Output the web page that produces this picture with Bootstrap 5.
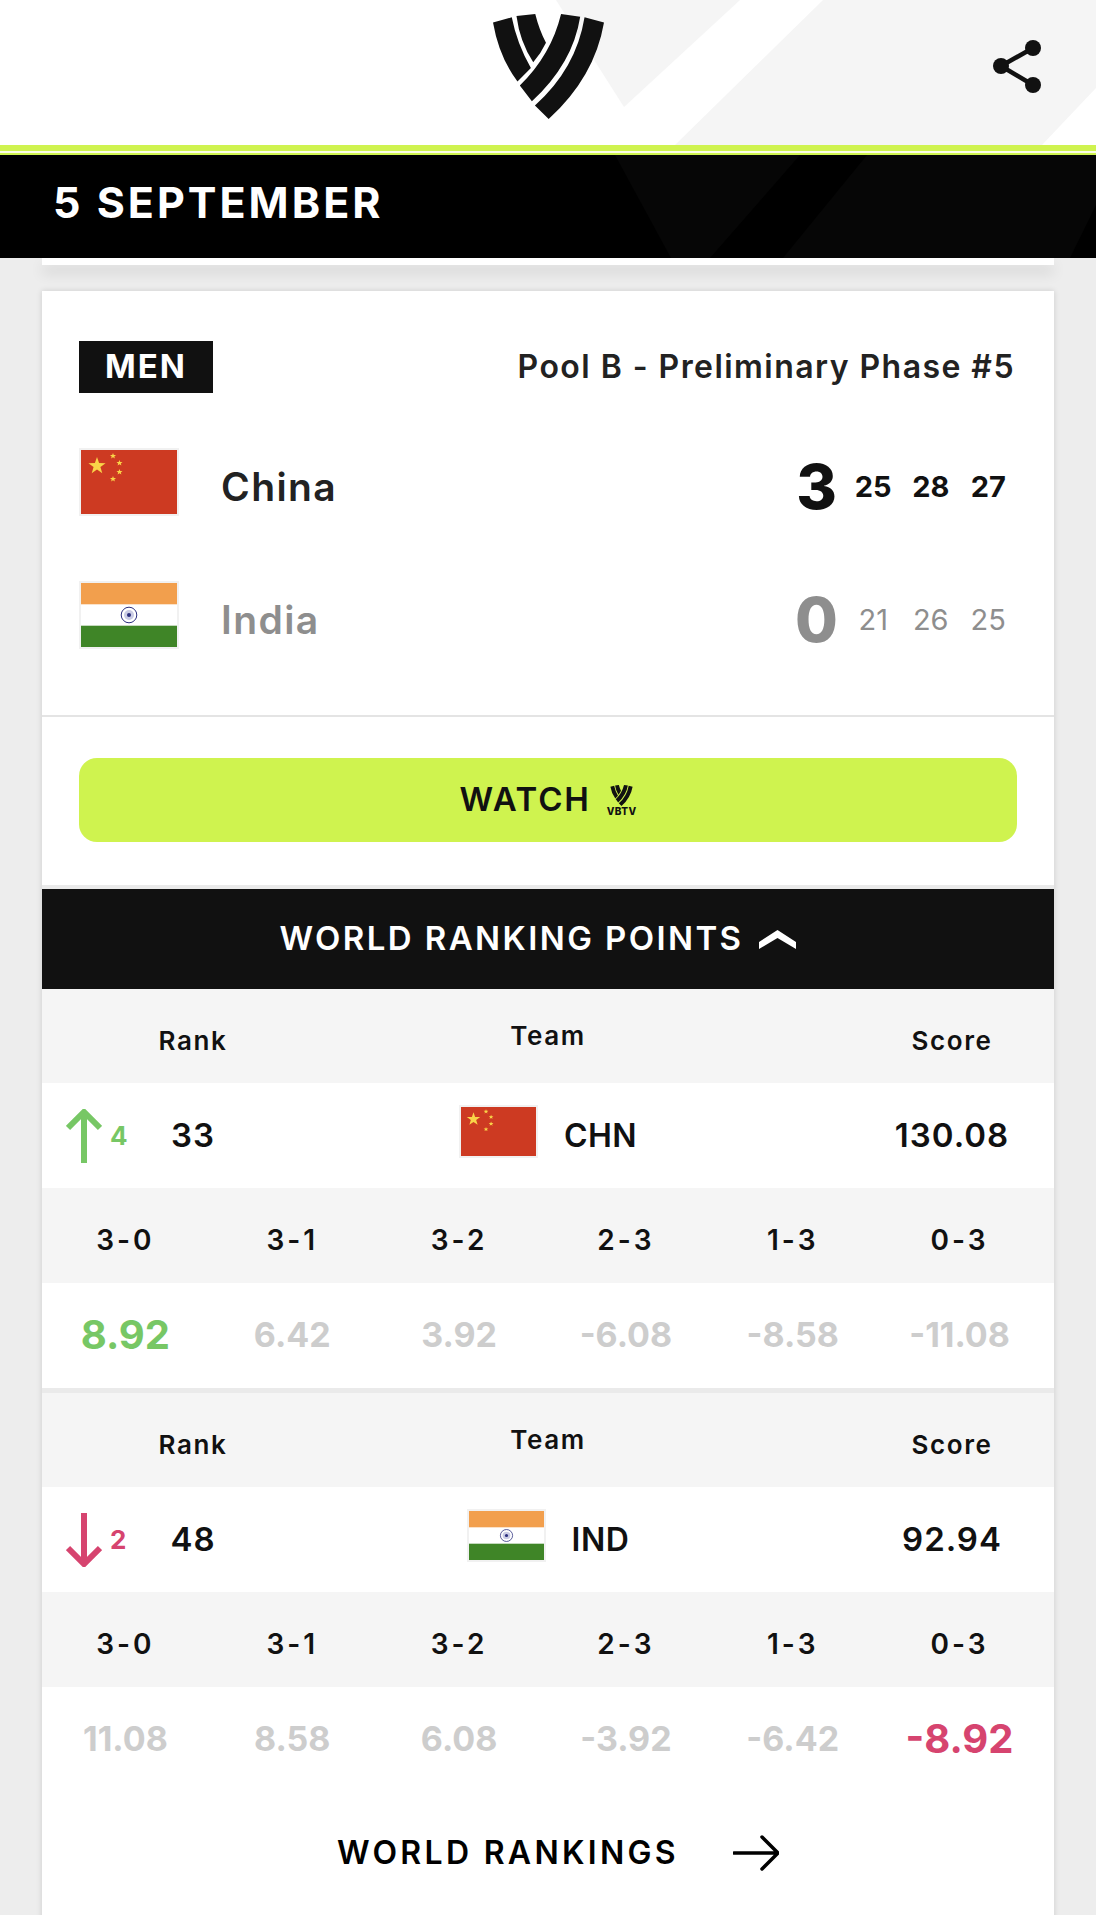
<!DOCTYPE html>
<html lang="en">

<head>
    <meta charset="UTF-8">
    <meta name="viewport" content="width=device-width, initial-scale=1.0">
    <title>5 September - Match Result</title>
    <link href="https://cdn.jsdelivr.net/npm/bootstrap@5.3.3/dist/css/bootstrap.min.css" rel="stylesheet">
    <script src="https://cdn.jsdelivr.net/npm/bootstrap@5.3.3/dist/js/bootstrap.bundle.min.js"></script>
    <style>
        html, body {
            height: 1915px;
            overflow: hidden;
        }

        body {
            background-color: #ededed;
            color: #111;
            font-family: Inter, "Liberation Sans", sans-serif;
        }

        /* header */
        .top-head {
            height: 145px;
            display: grid;
            grid-template-columns: 1fr auto 1fr;
        }

        .head-decor {
            inset: 0;
        }

        .head-logo {
            width: 111px;
            height: 105px;
            margin-top: 14px;
        }

        .share-icon {
            width: 52px;
            height: 58px;
            margin: 38px 52px 0 0;
            justify-self: end;
        }

        .lime-stripe {
            height: 10px;
            background-color: #fbfde6;
            border-top: 6px solid #cff34f;
            border-bottom: 2px solid #cff34f;
        }

        .date-bar {
            height: 103px;
            background-color: #000;
            color: #fff;
            padding: 0 0 8px 53px;
        }

        .date-bar span {
            font-size: 43px;
            font-weight: 700;
            letter-spacing: 3px;
            line-height: 1;
        }

        .prev-strip {
            height: 7px;
            margin: 0 42px 26px;
            background-color: #fff;
            box-shadow: 0 8px 14px rgba(0, 0, 0, .12);
        }

        /* match card */
        .match-box {
            margin: 0 42px;
            height: 1700px;
            background-color: #fff;
            box-shadow: 0 0 6px rgba(0, 0, 0, .14);
        }

        .match-top {
            height: 426px;
            padding: 50px 37px 0;
            border-bottom: 2px solid #e4e4e4;
        }

        .gender-tag {
            width: 134px;
            height: 52px;
            background-color: #111;
            color: #fff;
            font-size: 33px;
            font-weight: 700;
            letter-spacing: 2px;
        }

        .pool-name {
            font-size: 32px;
            font-weight: 600;
            letter-spacing: 1.45px;
            color: #222;
            margin-right: 2px;
        }

        .team-line {
            height: 133px;
        }

        .team-line.first {
            margin-top: 27px;
        }

        .flag-big {
            width: 100px;
            height: 68px;
            margin-bottom: 10px;
            border: 2px solid #f1f1f1;
        }

        .team-name {
            margin: 2px 0 0 42px;
            font-size: 39px;
            font-weight: 600;
            letter-spacing: 1.4px;
            color: #222;
        }

        .big-set {
            width: 56px;
            text-align: center;
            font-size: 62px;
            font-weight: 800;
            line-height: 1;
        }

        .set-pt {
            width: 57.5px;
            text-align: center;
            font-size: 29px;
        }

        .won {
            color: #111;
        }

        .won .set-pt {
            font-weight: 700;
        }

        .lost {
            color: #8e8e8e;
        }

        .lost .set-pt {
            font-weight: 400;
        }

        .watch-wrap {
            height: 172px;
            padding: 41px 37px 0;
            border-bottom: 4px solid #eaeaea;
        }

        .watch-btn {
            width: 938px;
            height: 84px;
            border-radius: 18px;
            border: 0;
            background-color: #cff34f;
            color: #111;
            font-size: 33px;
            font-weight: 600;
            letter-spacing: 1.8px;
        }

        .watch-btn:hover {
            background-color: #c4e845;
            color: #111;
        }

        .vbtv {
            font-size: 10px;
            font-weight: 800;
            line-height: 1;
            letter-spacing: .4px;
        }

        .vbtv svg {
            width: 23px;
            height: 21px;
        }

        .rank-toggle {
            height: 100px;
            padding-right: 20px;
            background-color: #111;
            color: #fff;
            font-size: 33px;
            font-weight: 600;
            letter-spacing: 2.4px;
        }

        /* ranking tables */
        .tri-cols {
            display: grid;
            grid-template-columns: 204px 1fr 204px;
            align-items: center;
        }

        .six-cols {
            display: grid;
            grid-template-columns: repeat(6, 1fr);
            align-items: center;
            text-align: center;
            padding-right: 11px;
        }

        .head-line {
            height: 94px;
            background-color: #f5f5f5;
            font-size: 26px;
            font-weight: 600;
            letter-spacing: 1.6px;
        }

        .head-line .rank-label {
            padding: 9px 0 0 98px;
            text-align: center;
        }

        .head-line .team-label {
            text-align: center;
            padding-bottom: 2px;
        }

        .head-line .score-label {
            padding-top: 9px;
            text-align: center;
        }

        .team-line-small {
            height: 105px;
            font-size: 33px;
            font-weight: 600;
            letter-spacing: 1px;
        }

        .delta {
            width: 98px;
            padding-left: 24px;
            font-size: 26px;
            font-weight: 700;
        }

        .delta svg {
            width: 36px;
            height: 54px;
            margin-right: 8px;
        }

        .delta.up {
            color: #77c765;
        }

        .delta.down {
            color: #d6446f;
        }

        .rank-num {
            width: 106px;
            text-align: center;
        }

        .flag-small {
            width: 79px;
            height: 53px;
            margin: 0 26px 8px 0;
            border: 2px solid #f1f1f1;
        }

        .team-code {
            font-size: 32px;
            font-weight: 600;
            letter-spacing: .5px;
        }

        .score-val {
            text-align: center;
        }

        .sets-head {
            height: 95px;
            padding-top: 8px;
            background-color: #f5f5f5;
            font-size: 28px;
            font-weight: 600;
            letter-spacing: 3px;
        }

        .sets-vals {
            height: 105px;
            padding-bottom: 2px;
            font-size: 34px;
            font-weight: 700;
            color: #cdcdcd;
        }

        .sets-vals .gain,
        .sets-vals .loss {
            font-size: 40px;
            font-weight: 700;
        }

        .gain {
            color: #77c765;
        }

        .loss {
            color: #d6446f;
        }

        .table-gap {
            height: 5px;
            background-color: #eaeaea;
        }

        .more-link {
            height: 140px;
            padding: 0 0 18px 20px;
            color: #000;
            font-size: 32px;
            font-weight: 600;
            letter-spacing: 3.3px;
            text-decoration: none;
        }

        .more-link svg {
            width: 46px;
            height: 36px;
            margin-left: 54px;
        }
    </style>
</head>

<body>
    <!-- shared drawings -->
    <svg width="0" height="0" class="position-absolute">
        <symbol id="vLogo" viewBox="127 42 331 313">
            <path fill="currentColor" d="M127 67 183 52Q198 130 240 203L200 243Q145 170 127 67Z" />
            <path fill="currentColor" d="M197 48 253 42Q265 90 285 128 270 160 247 186 207 125 197 48Z" />
            <path fill="currentColor" d="M330 42 387 50Q365 190 243 302L207 255Q300 165 330 42Z" />
            <path fill="currentColor" d="M400 52 458 67Q430 230 293 355L252 315Q375 205 400 52Z" />
        </symbol>
        <symbol id="flagChina" viewBox="0 0 96 64" preserveAspectRatio="none">
            <rect width="96" height="64" fill="#cd3a22" />
            <g fill="#f9d448">
                <polygon points="16,7 18.1,13.1 24.6,13.2 19.4,17.1 21.3,23.3 16,19.6 10.7,23.3 12.6,17.1 7.4,13.2 13.9,13.1" />
                <polygon points="32,3 32.8,5 35,5 33.3,6.4 33.9,8.5 32,7.3 30.1,8.5 30.7,6.4 29,5 31.2,5" />
                <polygon points="38.5,10 39.3,12 41.5,12 39.8,13.4 40.4,15.5 38.5,14.3 36.6,15.5 37.2,13.4 35.5,12 37.7,12" />
                <polygon points="38.5,19 39.3,21 41.5,21 39.8,22.4 40.4,24.5 38.5,23.3 36.6,24.5 37.2,22.4 35.5,21 37.7,21" />
                <polygon points="32,26 32.8,28 35,28 33.3,29.4 33.9,31.5 32,30.3 30.1,31.5 30.7,29.4 29,28 31.2,28" />
            </g>
        </symbol>
        <symbol id="flagIndia" viewBox="0 0 96 64" preserveAspectRatio="none">
            <rect width="96" height="64" fill="#fff" />
            <rect width="96" height="21.3" fill="#f29f4d" />
            <rect y="42.7" width="96" height="21.3" fill="#3f8527" />
            <circle cx="48" cy="32" r="7.8" fill="none" stroke="#2b2f7e" stroke-width="1" />
            <circle cx="48" cy="32" r="5" fill="#c9cbe4" />
            <circle cx="48" cy="32" r="2" fill="#2b2f7e" />
        </symbol>
    </svg>

    <!-- Header -->
    <header class="top-head position-relative bg-white overflow-hidden">
        <svg class="head-decor position-absolute" width="1096" height="145" viewBox="0 0 1096 145">
            <polygon points="556,0 740,0 624,107" fill="#f5f5f5" />
            <polygon points="823,0 1096,0 1096,88 1042,145 675,145" fill="#f5f5f5" />
        </svg>
        <div></div>
        <svg class="head-logo position-relative" style="color:#111">
            <use href="#vLogo" width="111" height="105" />
        </svg>
        <svg class="share-icon position-relative" viewBox="0 0 52 58">
            <g fill="#111" stroke="#111">
                <line x1="41" y1="10" x2="9" y2="28" stroke-width="4.5" />
                <line x1="9" y1="28" x2="41" y2="47" stroke-width="4.5" />
                <circle cx="41" cy="10" r="8" stroke="none" />
                <circle cx="9" cy="28" r="8" stroke="none" />
                <circle cx="41" cy="47" r="8" stroke="none" />
            </g>
        </svg>
    </header>
    <div class="lime-stripe"></div>

    <!-- Date -->
    <div class="date-bar position-relative d-flex align-items-center overflow-hidden">
        <svg class="head-decor position-absolute" width="1096" height="103" viewBox="0 0 1096 103">
            <polygon points="615,0 800,0 710,103 671,103" fill="#060606" />
            <polygon points="867,0 1096,0 1096,50 1070,103 783,103" fill="#060606" />
        </svg>
        <span class="position-relative">5 SEPTEMBER</span>
    </div>
    <div class="prev-strip"></div>

    <!-- Match -->
    <main class="match-box">
        <section class="match-top">
            <div class="d-flex justify-content-between align-items-center">
                <div class="gender-tag d-flex align-items-center justify-content-center">MEN</div>
                <div class="pool-name">Pool B - Preliminary Phase #5</div>
            </div>

            <div class="team-line first d-flex align-items-center won">
                <svg class="flag-big"><use href="#flagChina" width="96" height="64" /></svg>
                <div class="team-name flex-grow-1">China</div>
                <div class="big-set">3</div>
                <div class="set-pt">25</div>
                <div class="set-pt">28</div>
                <div class="set-pt">27</div>
            </div>
            <div class="team-line d-flex align-items-center lost">
                <svg class="flag-big"><use href="#flagIndia" width="96" height="64" /></svg>
                <div class="team-name flex-grow-1" style="color:#8e8e8e">India</div>
                <div class="big-set">0</div>
                <div class="set-pt">21</div>
                <div class="set-pt">26</div>
                <div class="set-pt">25</div>
            </div>
        </section>

        <section class="watch-wrap">
            <a href="#" class="btn watch-btn d-flex align-items-center justify-content-center gap-3">
                WATCH
                <span class="vbtv d-flex flex-column align-items-center">
                    <svg><use href="#vLogo" width="23" height="21" /></svg>
                    VBTV
                </span>
            </a>
        </section>

        <div class="rank-toggle d-flex align-items-center justify-content-center gap-3">
            WORLD RANKING POINTS
            <svg width="37" height="19" viewBox="0 0 37 19">
                <path d="M0 12 18.5 0 37 12V19L18.5 8 0 19Z" fill="#fff" />
            </svg>
        </div>

        <!-- China table -->
        <div class="tri-cols head-line">
            <div class="rank-label">Rank</div>
            <div class="team-label">Team</div>
            <div class="score-label">Score</div>
        </div>
        <div class="tri-cols team-line-small">
            <div class="d-flex align-items-center">
                <div class="delta up d-flex align-items-center">
                    <svg viewBox="0 0 36 54"><path d="M18 2V54M2 19 18 3 34 19" fill="none" stroke="currentColor" stroke-width="6" /></svg>
                    <span>4</span>
                </div>
                <div class="rank-num">33</div>
            </div>
            <div class="d-flex align-items-center justify-content-center">
                <svg class="flag-small"><use href="#flagChina" width="75" height="49" /></svg>
                <span class="team-code">CHN</span>
            </div>
            <div class="score-val">130.08</div>
        </div>
        <div class="six-cols sets-head">
            <div>3-0</div><div>3-1</div><div>3-2</div><div>2-3</div><div>1-3</div><div>0-3</div>
        </div>
        <div class="six-cols sets-vals">
            <div class="gain">8.92</div><div>6.42</div><div>3.92</div><div>-6.08</div><div>-8.58</div><div>-11.08</div>
        </div>
        <div class="table-gap"></div>

        <!-- India table -->
        <div class="tri-cols head-line">
            <div class="rank-label">Rank</div>
            <div class="team-label">Team</div>
            <div class="score-label">Score</div>
        </div>
        <div class="tri-cols team-line-small">
            <div class="d-flex align-items-center">
                <div class="delta down d-flex align-items-center">
                    <svg viewBox="0 0 36 54"><path d="M18 0V52M2 35 18 51 34 35" fill="none" stroke="currentColor" stroke-width="6" /></svg>
                    <span>2</span>
                </div>
                <div class="rank-num">48</div>
            </div>
            <div class="d-flex align-items-center justify-content-center">
                <svg class="flag-small"><use href="#flagIndia" width="75" height="49" /></svg>
                <span class="team-code">IND</span>
            </div>
            <div class="score-val">92.94</div>
        </div>
        <div class="six-cols sets-head">
            <div>3-0</div><div>3-1</div><div>3-2</div><div>2-3</div><div>1-3</div><div>0-3</div>
        </div>
        <div class="six-cols sets-vals">
            <div>11.08</div><div>8.58</div><div>6.08</div><div>-3.92</div><div>-6.42</div><div class="loss">-8.92</div>
        </div>

        <a href="#" class="more-link d-flex align-items-center justify-content-center">
            WORLD RANKINGS
            <svg viewBox="0 0 46 36"><path d="M1 18H44M29 2 45 18 29 34" fill="none" stroke="#000" stroke-width="3.5" stroke-linecap="round" /></svg>
        </a>
    </main>
</body>

</html>
